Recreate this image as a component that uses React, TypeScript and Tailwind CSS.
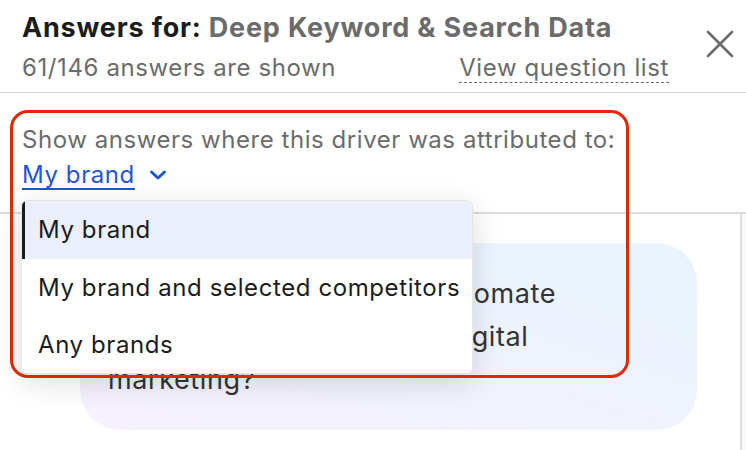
import React from "react";

const options = ["My brand", "My brand and selected competitors", "Any brands"];

const App: React.FC = () => {
  const selected = options[0];

  return (
    <div className="relative h-[450px] w-[746px] overflow-hidden bg-white font-['Inter',sans-serif]">
      {/* header */}
      <header className="flex h-[93px] border-b border-[#d6d6d6] pl-[22px]">
        <div className="flex w-[647px] flex-col pt-[11px]">
          <h1 className="text-[27px] leading-[34px] font-bold tracking-[0.8px] text-[#1c1c1c]">
            Answers for: <span className="text-[#6b6b6b]">Deep Keyword &amp; Search Data</span>
          </h1>
          <div className="mt-[8px] flex items-center justify-between text-[24px] leading-[30px] tracking-[0.6px] text-[#6b6b6b]">
            <span>61/146 answers are shown</span>
            <span className="border-b border-dashed border-[#6b6b6b] leading-[28px]">
              View question list
            </span>
          </div>
        </div>
        <button className="ml-auto mr-[12px] mt-[30px] flex h-[28px] w-[28px] items-center justify-center">
          <svg width="28" height="28" viewBox="0 0 28 28" fill="none" stroke="#6b6b6b" strokeWidth="2.6" strokeLinecap="round">
            <path d="M2 2 L26 26 M26 2 L2 26" />
          </svg>
        </button>
      </header>

      {/* filter */}
      <section className="h-[119px] pl-[22px] pt-[32px]">
        <p className="text-[24px] leading-[30px] tracking-[0.55px] text-[#6b6b6b]">
          Show answers where this driver was attributed to:
        </p>
        <button className="mt-[5px] flex items-center gap-[14px] text-[24px] leading-[30px] tracking-[0.6px] text-[#1f55d6]">
          <span className="underline decoration-[1.5px] underline-offset-[5px]">{selected}</span>
          <svg width="18" height="12" viewBox="0 0 18 12" fill="none" stroke="#1f55d6" strokeWidth="3" strokeLinecap="round" strokeLinejoin="round">
            <path d="M2.5 3 L9 9 L15.5 3" />
          </svg>
        </button>
      </section>

      {/* answers list */}
      <div className="flex h-[238px] border-t-2 border-[#dcdcdc]">
        <div className="flex-1 pl-[80px] pt-[29px] pr-[43px]">
          <div className="h-[187px] rounded-[40px] bg-gradient-to-tr from-[#f6f1fd] to-[#e8f4fe] pl-[28px] pt-[29px] text-[27px] leading-[43px] tracking-[0.6px] text-[#333333]">
            How do I use AI tools to automate
            <br />
            keyword research for my digital
            <br />
            marketing?
          </div>
        </div>
        <div className="w-[6px] border-l-2 border-[#dcdcdc] bg-[#f9f9f9]" />
      </div>

      {/* dropdown menu */}
      <ul className="absolute left-[21px] top-[200px] w-[452px] overflow-hidden rounded-[6px] border border-[#e6e6e6] bg-white shadow-[0_8px_30px_rgba(0,0,0,0.14)]">
        {options.map((opt) => (
          <li
            key={opt}
            className={
              opt === selected
                ? "flex h-[58px] items-center border-l-[3px] border-[#1c1c1c] bg-[#ebeffc] pl-[13px] text-[24px] tracking-[0.6px] text-[#1c1c1c]"
                : "flex h-[57px] items-center pl-[16px] text-[24px] tracking-[0.6px] text-[#1c1c1c]"
            }
          >
            {opt}
          </li>
        ))}
      </ul>

      {/* highlight frame */}
      <div className="pointer-events-none absolute left-[10px] top-[110px] h-[268px] w-[619px] rounded-[18px] border-[3px] border-[#e42600]" />
    </div>
  );
};

export default App;
